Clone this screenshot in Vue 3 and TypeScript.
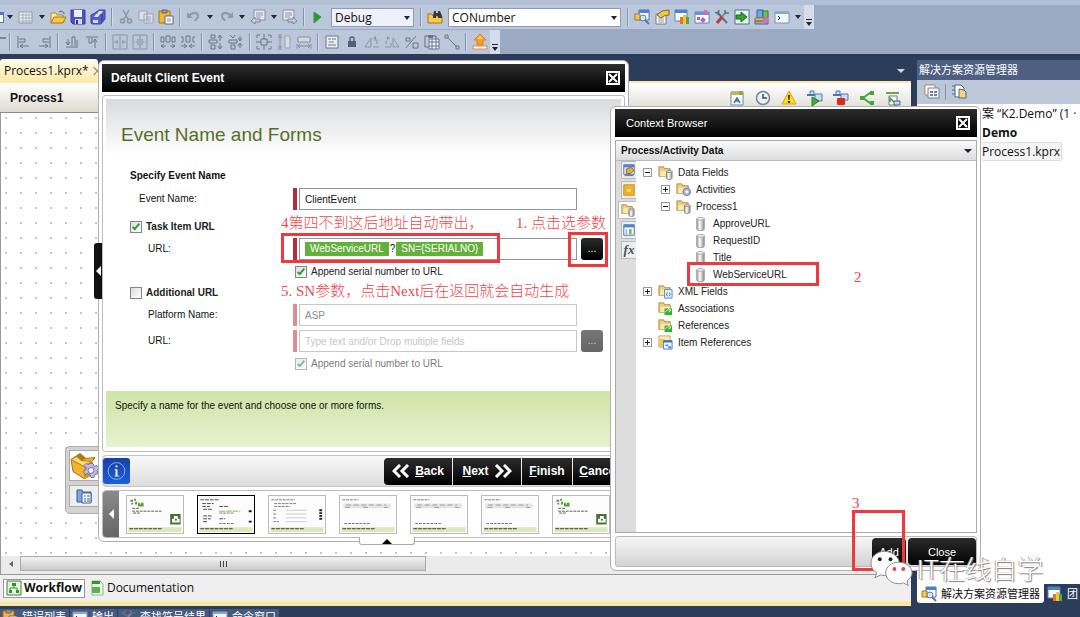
<script setup lang="ts">
import { ref } from 'vue'

type Item = { kind: 'icon' | 'caret' | 'sep'; id?: string }

const icon = (...ids: string[]): Item[] => ids.map((id) => ({ kind: 'icon', id }))
const caret: Item = { kind: 'caret' }
const sep: Item = { kind: 'sep' }

const standardBar: Item[] = [
  caret, ...icon('grid'), caret, ...icon('open', 'save', 'saveall'), sep,
  ...icon('cut', 'copy', 'paste'), sep, ...icon('undo'), caret, ...icon('redo'), caret,
  ...icon('navback'), caret, ...icon('navfwd'), sep, ...icon('play'),
]
const windowBar: Item[] = [
  sep, ...icon('explorer', 'props', 'team', 'start', 'tools', 'export', 'objects', 'console'), caret,
]
const layoutBar: Item[] = [
  sep, ...icon('alignleft', 'alignright'), sep, ...icon('alignbottom', 'aligntop'), sep,
  ...icon('centerh', 'centerv'), sep, ...icon('hinc', 'hdec'), sep, ...icon('vinc', 'vdec'), sep,
  ...icon('samesize', 'sameheight', 'samewidth'), sep,
  ...icon('list', 'lock', 'flip', 'mirror', 'percent', 'table', 'line'), sep, ...icon('upload'),
]
const processIcons = ['chart', 'clock', 'warn', 'runproc', 'stopproc', 'share', 'layoutpage']

const eventName = ref('ClientEvent')
const platform = ref('ASP')
const url = ref('')
const url2 = ref('')
const taskItem = ref(true)
const additional = ref(false)
const append1 = ref(true)
const append2 = ref(true)

const thumbs = ['intro', 'form', 'list', 'grid', 'grid', 'grid', 'intro']
const sideTabs = ['sideenv', 'sidebox', 'foldergray', 'sidetable', 'fx']

type Node = { level: number; toggle: '' | '+' | '-'; id: string; label: string }
const nodes: Node[] = [
  { level: 0, toggle: '-', id: 'foldergray', label: 'Data Fields' },
  { level: 1, toggle: '+', id: 'folderact', label: 'Activities' },
  { level: 1, toggle: '-', id: 'foldergray', label: 'Process1' },
  { level: 2, toggle: '', id: 'field', label: 'ApproveURL' },
  { level: 2, toggle: '', id: 'field', label: 'RequestID' },
  { level: 2, toggle: '', id: 'field', label: 'Title' },
  { level: 2, toggle: '', id: 'field', label: 'WebServiceURL' },
  { level: 0, toggle: '+', id: 'folderxml', label: 'XML Fields' },
  { level: 0, toggle: '', id: 'foldergreen', label: 'Associations' },
  { level: 0, toggle: '', id: 'foldergreen', label: 'References' },
  { level: 0, toggle: '+', id: 'folderitem', label: 'Item References' },
]
const outputTabs = [
  { id: 'paste', label: '错误列表' },
  { id: 'console', label: '输出' },
  { id: 'tools', label: '查找符号结果' },
  { id: 'console', label: '命令窗口' },
]
</script>

<template>
  <div class="ide">
    <svg class="defs" aria-hidden="true">
      <defs>
        <linearGradient id="cyl"><stop offset="0" stop-color="#999" /><stop offset=".4" stop-color="#fff" /><stop offset="1" stop-color="#8a8a8a" /></linearGradient>
        <symbol id="grid" viewBox="0 0 16 16"><path d="M1 3h13v11H1z" fill="#eef1f6" stroke="#8f99ab" /><path d="M2 6h12M2 9h12M2 12h12M5 4v10M8 4v10M11 4v10" stroke="#a5aebd" /></symbol>
        <symbol id="open" viewBox="0 0 16 16"><path d="M1 14V4h5l1 2h6v3" fill="#ffe9a0" stroke="#b58a24" /><path d="M1 14l3-6h12l-3 6z" fill="#fac846" stroke="#a87412" /><path d="M9 3c3-2 5 0 5 2" fill="none" stroke="#395fa8" /></symbol>
        <symbol id="save" viewBox="0 0 16 16"><path d="M1 1h14v14H3l-2-2z" fill="#4d52c4" stroke="#3a3c99" /><path d="M4 1h8v7H4z" fill="#eef" /><path d="M5 10h7v5H5z" fill="#d5d8f2" /><path d="M6 11h2v4H6z" fill="#34378e" /></symbol>
        <symbol id="saveall" viewBox="0 0 16 16"><path d="M5 4l4-3h6v9l-4 5H2l-1-1V6l4-2z" fill="#5a5ecb" stroke="#3f42a6" /><path d="M9 2h4l-2 3H7zM6 5h4L8 8H4z" fill="#dfe1f8" /><path d="M3 11h5v3H3z" fill="#d5d8f2" /><path d="M12 5v8" stroke="#34378e" /></symbol>
        <symbol id="cut" viewBox="0 0 16 16"><path d="M5 1l5 9M11 1L6 10" stroke="#8b94a3" stroke-width="1.5" fill="none" /><circle cx="4.500" cy="12" r="2" fill="none" stroke="#8b94a3" stroke-width="1.500" /><circle cx="11.500" cy="12" r="2" fill="none" stroke="#8b94a3" stroke-width="1.500" /></symbol>
        <symbol id="copy" viewBox="0 0 16 16"><path d="M1 2h8v9H1zM6 5h9v9H6z" fill="#dde2ea" stroke="#9ba4b3" /><path d="M8 8h5M8 10h5M8 12h5" stroke="#a0a8b6" /></symbol>
        <symbol id="paste" viewBox="0 0 16 16"><path d="M1 2h11v12H1z" fill="#f1b73b" stroke="#a6741a" /><path d="M4 1h5v3H4z" fill="#999" stroke="#666" /><path d="M7 7h8v8H7z" fill="#fff" stroke="#5a6684" /><path d="M9 10h4M9 12h4" stroke="#8291b5" /></symbol>
        <symbol id="undo" viewBox="0 0 16 16"><path d="M3 7c3-4 9-4 9 0 0 3-3 4-3 5" fill="none" stroke="#8e98ac" stroke-width="2" /><path d="M1 3v6h6z" fill="#8e98ac" /></symbol>
        <symbol id="redo" viewBox="0 0 16 16"><path d="M13 7c-3-4-9-4-9 0 0 3 3 4 3 5" fill="none" stroke="#8e98ac" stroke-width="2" /><path d="M15 3v6H9z" fill="#8e98ac" /></symbol>
        <symbol id="navback" viewBox="0 0 16 16"><path d="M4 1h11v10H4z" fill="#e7eaf0" stroke="#8791a3" /><path d="M6 4h7M6 6h7M6 8h5" stroke="#9099a9" /><path d="M1 12l4-4v2h5v3H5v2z" fill="#c8cdd8" stroke="#7d8798" /></symbol>
        <symbol id="navfwd" viewBox="0 0 16 16"><path d="M1 1h11v10H1z" fill="#e7eaf0" stroke="#8791a3" /><path d="M3 4h7M3 6h7M3 8h5" stroke="#9099a9" /><path d="M15 12l-4-4v2H6v3h5v2z" fill="#c8cdd8" stroke="#7d8798" /></symbol>
        <symbol id="play" viewBox="0 0 16 16"><path d="M4 3l7 5-7 6z" fill="#2a9a35" stroke="#3a9443" /></symbol>
        <symbol id="findfolder" viewBox="0 0 16 16"><path d="M1 14V5h4l1 2h9v7z" fill="#f9c94e" stroke="#a4741b" /><path d="M6 7l1-5h2v2h2V2h2l2 5v2h-4V7H9v2H6z" fill="#3a3a3a" /></symbol>
        <symbol id="explorer" viewBox="0 0 16 16"><path d="M5 1h10v10H5z" fill="#fff" stroke="#4a71b8" /><path d="M5 1h10v3H5z" fill="#4d7fd4" /><path d="M1 5h5v6H1z" fill="#f5cb55" stroke="#a5781f" /><circle cx="9" cy="9" r="3" fill="#cfe6fa" stroke="#5e7f9d" /><path d="M11 11l4 4" stroke="#607892" stroke-width="2" /></symbol>
        <symbol id="props" viewBox="0 0 16 16"><path d="M2 5h10v10H2z" fill="#fff" stroke="#6b7890" /><path d="M4 9h6M4 11h6M4 13h6" stroke="#8c97aa" /><path d="M3 6l5-4 7-1v5l-5 1-3 2z" fill="#f0c750" stroke="#8c6919" /></symbol>
        <symbol id="team" viewBox="0 0 16 16"><path d="M1 1h12v11H1z" fill="#fff" stroke="#5e7fb8" /><path d="M1 1h12v3H1z" fill="#4d7fd4" /><path d="M6 8h3v7H6z" fill="#e67331" /><path d="M9 6h3v9H9z" fill="#f2c43d" /><path d="M12 8h3v7h-3z" fill="#4ba84b" /></symbol>
        <symbol id="start" viewBox="0 0 16 16"><path d="M1 3h14v11H1z" fill="#fff" stroke="#5e7fb8" /><path d="M1 3h14v3H1z" fill="#6695dc" /><path d="M3 8h3v3H3z" fill="#e65b4b" /><path d="M6 11l3-3 3 3-3 3z" fill="#a46ad1" /><path d="M10 1h3v4h-3z" fill="#e26ba6" /></symbol>
        <symbol id="tools" viewBox="0 0 16 16"><path d="M3 3l10 11" stroke="#5d6d8b" stroke-width="2" /><path d="M12 3L8 8" stroke="#7c889c" stroke-width="2" /><path d="M8 8l-5 6" stroke="#c13a32" stroke-width="3" /><path d="M1 3l3 2 1-4M11 1v3h4" fill="none" stroke="#5d6d8b" stroke-width="1.500" /></symbol>
        <symbol id="export" viewBox="0 0 16 16"><path d="M1 1h14v14H1z" fill="#eaf5ea" stroke="#4c6fa4" /><path d="M2 6h5V3l6 5-6 5v-3H2z" fill="#2fa336" stroke="#146f1e" /></symbol>
        <symbol id="objects" viewBox="0 0 16 16"><path d="M3 1h6v8H3z" fill="#6fa8ee" stroke="#3264a8" /><path d="M9 2h5v7H9z" fill="#71bf59" stroke="#347a2a" /><path d="M1 9h9v3H1z" fill="#f4c243" stroke="#9a7323" /><path d="M1 12h13v3H1z" fill="#9ab" stroke="#567" /><circle cx="12" cy="11" r="3" fill="#d66ac3" /></symbol>
        <symbol id="console" viewBox="0 0 16 16"><path d="M1 3h14v11H1z" fill="#f3f6fb" stroke="#7c93bd" /><path d="M1 3h14v2H1z" fill="#86a7dc" /><path d="M4 7l2 2-2 2" fill="none" stroke="#223" /></symbol>
        <symbol id="alignleft" viewBox="0 0 16 16"><path d="M2 2v12M3 5h6v3H3M4 12h9M7 10l-3 2 3 2" fill="none" stroke="#6b778b" /></symbol>
        <symbol id="alignright" viewBox="0 0 16 16"><path d="M14 2v12M13 5H7v3h6M3 12h9M9 10l3 2-3 2" fill="none" stroke="#6b778b" /></symbol>
        <symbol id="alignbottom" viewBox="0 0 16 16"><path d="M2 13h12M4 11V5M2 8l2 3 2-3M8 12V3h3v9M13 12V6" fill="none" stroke="#6b778b" /></symbol>
        <symbol id="aligntop" viewBox="0 0 16 16"><path d="M2 3h12M5 4v5h3V4M11 5v9M9 8l2-3 2 3" fill="none" stroke="#6b778b" /></symbol>
        <symbol id="centerh" viewBox="0 0 16 16"><path d="M1 1h14v14H1zM8 2v3M8 11v3M8 5v6M2 8h4M10 8h4M5 6v4M11 6v4" fill="none" stroke="#8994a7" /></symbol>
        <symbol id="centerv" viewBox="0 0 16 16"><path d="M1 1h14v14H1zM8 2v4M8 10v4M4 8h8M5 6h6M5 10h6M2 8h1M13 8h1" fill="none" stroke="#8994a7" /></symbol>
        <symbol id="hinc" viewBox="0 0 16 16"><path d="M1 3h3v5H1zM6 2h4v6H6zM12 3h3v5h-3zM1 12h5M4 10l-3 2 3 2M10 12h5M12 10l3 2-3 2" fill="none" stroke="#6b778b" /></symbol>
        <symbol id="hdec" viewBox="0 0 16 16"><path d="M1 3h2v5H1M6 2h4v6H6zM15 3h-2v5h2M1 12h5M4 10l3 2-3 2M10 12h5M12 10l-3 2 3 2" fill="none" stroke="#6b778b" /></symbol>
        <symbol id="vinc" viewBox="0 0 16 16"><path d="M3 1h4v3H3zM1 6h8v3H1zM3 11h4v4H3zM12 7V2M10 4l2-3 2 3M12 9v5M10 12l2 3 2-3" fill="none" stroke="#6b778b" /></symbol>
        <symbol id="vdec" viewBox="0 0 16 16"><path d="M2 1l3 3 2-3M1 6h8v3H1zM3 11h4v4H3zM12 7V2M10 4l2 3 2-3M12 9v5M10 12l2-3 2 3" fill="none" stroke="#6b778b" /></symbol>
        <symbol id="samesize" viewBox="0 0 16 16"><path d="M5 5h6v6H5zM1 4V1h3M12 1h3v3M15 12v3h-3M4 15H1v-3M7 1h2M7 15h2M1 7v2M15 7v2M8 2v3M8 11v3M2 8h3M11 8h3" fill="none" stroke="#6b778b" /></symbol>
        <symbol id="sameheight" viewBox="0 0 16 16"><path d="M2 1h4M2 15h4M4 2v12M2 4l2-2 2 2M2 12l2 2 2-2" fill="none" stroke="#858fa1" /><path d="M9 2h5v12H9z" fill="#d5dae4" stroke="#9aa4b5" /></symbol>
        <symbol id="samewidth" viewBox="0 0 16 16"><path d="M2 3h12v5H2z" fill="#d5dae4" stroke="#858fa1" /><path d="M1 10v5M15 10v5M2 12h12M4 10l-2 2 2 2M12 10l2 2-2 2" fill="none" stroke="#858fa1" /></symbol>
        <symbol id="list" viewBox="0 0 16 16"><path d="M2 2h12v12H2z" fill="#e9edf3" stroke="#6f7b8e" /><path d="M4 5h3M8 5h4M5 8h5M4 11h8" stroke="#6f7b8e" /></symbol>
        <symbol id="lock" viewBox="0 0 16 16"><path d="M6 7V5a2 2 0 0 1 4 0v2" fill="none" stroke="#566175" stroke-width="1.500" /><path d="M4 7h8v6H4z" fill="#566175" /></symbol>
        <symbol id="flip" viewBox="0 0 16 16"><path d="M1 13h6V4zM9 13h6M10 6h3v4" fill="none" stroke="#8b95a7" /><path d="M9 4l3-2v4z" fill="#8b95a7" /></symbol>
        <symbol id="mirror" viewBox="0 0 16 16"><path d="M15 13H9V4zM1 13h6V9M3 7H2v3" fill="none" stroke="#8b95a7" /><path d="M6 4L3 2v4z" fill="#8b95a7" /></symbol>
        <symbol id="percent" viewBox="0 0 16 16"><path d="M2 14L12 2M2 4h4v3H2zM9 9h5v5H9z" fill="none" stroke="#6b778b" /></symbol>
        <symbol id="table" viewBox="0 0 16 16"><path d="M1 2h11v11H1z" fill="#c5cbd6" stroke="#5f6b80" /><path d="M4 1h5v3H4z" fill="#69758a" /><path d="M5 5h10v10H5zM5 8h10M5 12h10M8 5v10M12 5v10" fill="#edf0f5" stroke="#6b778b" /></symbol>
        <symbol id="line" viewBox="0 0 16 16"><path d="M1 1h3v3H1zM12 12h3v3h-3zM4 4l8 8" fill="none" stroke="#6b778b" /></symbol>
        <symbol id="upload" viewBox="0 0 16 16"><path d="M1 12h14v3H1z" fill="#fff" stroke="#d98a4a" /><path d="M8 0l6 6h-3v5H5V6H2z" fill="#fb9b22" stroke="#e8821e" /><path d="M8 2l3 3H5z" fill="#ffe07b" /></symbol>
        <symbol id="chart" viewBox="0 0 16 16"><path d="M2 2h12v13H2z" fill="#fff" stroke="#6485a9" /><path d="M2 2h12v3H2z" fill="#d9ae4c" /><path d="M5 13l3-5 3 5M6 11h4" fill="none" stroke="#3576b7" stroke-width="1.500" /><path d="M10 1h4v4h-4z" fill="#8cae3e" /></symbol>
        <symbol id="clock" viewBox="0 0 16 16"><circle cx="8" cy="8" r="6.500" fill="#e8f1fb" stroke="#7a8396" stroke-width="1.500" /><path d="M8 4v4h4" fill="none" stroke="#33456a" stroke-width="1.500" /></symbol>
        <symbol id="warn" viewBox="0 0 16 16"><path d="M8 1l7 13H1z" fill="#ffd91b" stroke="#dca60c" stroke-linejoin="round" /><path d="M7 5h2l-.5 5h-1zM7 11h2v2H7z" fill="#222" /></symbol>
        <symbol id="runproc" viewBox="0 0 16 16"><path d="M3 1h4v4H3zM8 4h7v7H8z" fill="#cbdff3" stroke="#527aa8" /><path d="M0 5h8" stroke="#4275b1" stroke-width="2" /><path d="M5 7l7 4-7 5z" fill="#42ae3e" stroke="#277b29" /></symbol>
        <symbol id="stopproc" viewBox="0 0 16 16"><path d="M3 1h4v4H3zM8 4h7v6H8z" fill="#cbdff3" stroke="#527aa8" /><path d="M0 5h8" stroke="#4275b1" stroke-width="2" /><rect x="4" y="8" width="8" height="7" rx="1" fill="#dc2a22" /></symbol>
        <symbol id="share" viewBox="0 0 16 16"><path d="M14 3h-3L4 8l7 5h3" fill="none" stroke="#3eae3a" stroke-width="2" /><path d="M1 6h5v4H1zM11 1h4v4h-4zM11 11h4v4h-4z" fill="#42a83c" /></symbol>
        <symbol id="layoutpage" viewBox="0 0 16 16"><path d="M1 2h13v2H1z" fill="#69a457" /><path d="M4 6h8v9H4z" fill="#fff" stroke="#668098" /><path d="M5 12V8l4 4" fill="none" stroke="#36a335" stroke-width="1.500" /><path d="M9 11h6v4H9z" fill="#c6d7e9" stroke="#4c6787" /></symbol>
        <symbol id="winstack" viewBox="0 0 16 16"><path d="M1 1h10v10H1z" fill="#fff" stroke="#a58a4c" /><path d="M4 4h11v10H4z" fill="#f1f3f8" stroke="#77839c" /><path d="M6 8h3M6 11h3M10 8h3M10 11h3" stroke="#77839c" stroke-width="2" /></symbol>
        <symbol id="pages" viewBox="0 0 16 16"><path d="M1 2h3M1 6h3M1 10h3" stroke="#3b6bb0" /><path d="M4 1h6l3 3v9H4z" fill="#fff" stroke="#53678b" /><path d="M8 5l5 1 2 2v6H8z" fill="#f6d477" stroke="#53678b" /></symbol>
        <symbol id="folderbase" viewBox="0 0 16 16"><path d="M1 12V2h5l1 2h6v8z" fill="#eed07e" stroke="#a8873c" /><path d="M2 12l1-6h10v6z" fill="#fbe8ae" /></symbol>
        <symbol id="field" viewBox="0 0 16 16"><path d="M4 3v11c0 2 8 2 8 0V3z" fill="url(#cyl)" stroke="#999" /><ellipse cx="8" cy="3" rx="4" ry="1.500" fill="#eee" stroke="#aaa" /></symbol>
        <symbol id="foldergray" viewBox="0 0 16 16"><use href="#folderbase" /><path d="M9 7v7c0 2 6 2 6 0V7z" fill="url(#cyl)" stroke="#888" /><ellipse cx="12" cy="7" rx="3" ry="1" fill="#eee" stroke="#888" /></symbol>
        <symbol id="folderact" viewBox="0 0 16 16"><use href="#folderbase" /><circle cx="11.500" cy="10.500" r="4" fill="#a9bce6" stroke="#5d71b4" /><circle cx="11.500" cy="10.500" r="1.500" fill="#fff" /></symbol>
        <symbol id="folderxml" viewBox="0 0 16 16"><use href="#folderbase" /><path d="M7 6h8v9H7z" fill="#e9f3fd" stroke="#5687bd" /><path d="M10 9l-1 2 1 2M12 9l1 2-1 2" fill="none" stroke="#2874ba" /></symbol>
        <symbol id="foldergreen" viewBox="0 0 16 16"><use href="#folderbase" /><path d="M7 8h8v7H7z" fill="#34ae35" /><path d="M8 12c1-3 3-3 5-2M11 8l3 2-3 2" fill="none" stroke="#d9ffd0" /></symbol>
        <symbol id="folderitem" viewBox="0 0 16 16"><path d="M1 1h12v12H1z" fill="#fff1ca" stroke="#d39b38" /><path d="M1 4h7v9H1z" fill="#efc668" /><path d="M6 6h9v9H6z" fill="#fff" stroke="#3873c4" /><path d="M6 6h9v2H6z" fill="#3873c4" /><path d="M8 10h3v2H8zM11 12h3v2h-3z" fill="#4f8ede" /></symbol>
        <symbol id="sideenv" viewBox="0 0 16 16"><path d="M2 2h12v11H2z" fill="#dbe8fa" stroke="#5271ac" /><path d="M2 2h12v3H2z" fill="#5b80ce" /><path d="M5 7l5-2 4 3-4 4H5z" fill="#e3ae42" stroke="#8b6521" /><path d="M3 14h10" stroke="#6d7f9e" stroke-width="2" /></symbol>
        <symbol id="sidebox" viewBox="0 0 16 16"><path d="M2 2h12v12H2z" fill="#f4b423" stroke="#c98b16" /><path d="M5 6h6v5H5z" fill="#ffd979" stroke="#e5a62b" /></symbol>
        <symbol id="sidetable" viewBox="0 0 16 16"><path d="M2 2h12v12H2z" fill="#f1f6fc" stroke="#466fae" /><path d="M2 2h12v3H2z" fill="#4f82cf" /><path d="M4 7h2v6H4z" fill="#9dbfe9" /><path d="M8 7h3v6H8z" fill="#79b86c" /></symbol>
        <symbol id="box" viewBox="0 0 30 28"><path d="M1 8l9-6 6 5 9-1-3 4v13l-8 4-11-7z" fill="#f3b52d" stroke="#a8710f" /><path d="M1 8l9-6 6 5-9 5z" fill="#b07a1c" /><path d="M1 8l6-3 4 4 11 1-8 5z" fill="#ffdb72" stroke="#b67f17" /><path d="M14 15l8-4v13l-8 4z" fill="#dc9414" /><g transform="translate(21 20)"><path d="M-1-8h3l1 3 3-1 2 3-2 2 1 3-3 1-1 3h-3l-1-3-3-1-2 1-2-3 3-2v-2l-2-2 2-2 3 1z" fill="#bdbce8" stroke="#7371ac" /><circle cx="0" cy="-1" r="3" fill="#eee" stroke="#7371ac" /></g></symbol>
        <symbol id="page" viewBox="0 0 16 16"><path d="M1 14V2h5l1 2h8v10z" fill="#7ba7da" stroke="#365f97" /><path d="M6 5h9v10H6z" fill="#fff" stroke="#365f97" /><path d="M8 8h2M11 8h3M8 11h2M11 11h3M8 13h2M11 13h3" stroke="#365f97" /></symbol>
        <symbol id="flow" viewBox="0 0 16 16"><path d="M1 1h14v14H1z" fill="#e9f3e5" stroke="#447a37" /><path d="M6 3h4v3H6zM3 10h3v3H3zM10 10h3v3h-3z" fill="#329327" /><path d="M8 6v2M4 10V8h7v2" fill="none" stroke="#329327" /></symbol>
        <symbol id="doc" viewBox="0 0 16 16"><path d="M3 1h8l3 3v11H3z" fill="#f4faf0" stroke="#8fb588" /><path d="M3 1h8v3H3z" fill="#2c9b27" /><path d="M3 7h8v6H3z" fill="#56b64b" /></symbol>
        <symbol id="boxclose" viewBox="0 0 16 16"><path d="M2 2h12v12H2z" fill="#111" stroke="#fff" stroke-width="2" /><path d="M4 4l8 8M12 4l-8 8" stroke="#fff" stroke-width="2" /></symbol>
      </defs>
    </svg>

    <header class="bars">
      <div class="bar" role="toolbar" aria-label="Standard">
        <span class="stub"></span>
        <template v-for="(t, i) in standardBar" :key="i">
          <button v-if="t.kind === 'icon'" class="tool" type="button" :aria-label="t.id"><svg><use :href="'#' + t.id" /></svg></button>
          <span v-else :class="t.kind"></span>
        </template>
        <span class="pick config"><select aria-label="Configuration"><option>Debug</option></select></span>
        <span class="sep"></span>
        <button class="tool" type="button" aria-label="Find in files"><svg><use href="#findfolder" /></svg></button>
        <span class="pick search"><select aria-label="Find"><option>CONumber</option></select></span>
        <template v-for="(t, i) in windowBar" :key="i">
          <button v-if="t.kind === 'icon'" class="tool" type="button" :aria-label="t.id"><svg><use :href="'#' + t.id" /></svg></button>
          <span v-else :class="t.kind"></span>
        </template>
        <span class="more"></span>
      </div>
      <div class="bar" role="toolbar" aria-label="Layout">
        <span class="stub plain"></span>
        <template v-for="(t, i) in layoutBar" :key="i">
          <button v-if="t.kind === 'icon'" class="tool" type="button" :aria-label="t.id"><svg><use :href="'#' + t.id" /></svg></button>
          <span v-else :class="t.kind"></span>
        </template>
        <span class="more"></span>
      </div>
    </header>

    <main class="work">
      <section class="editor">
        <div class="tabs"><a href="#" class="tab">Process1.kprx*<i></i></a><i class="drop"></i></div>
        <div class="process">
          <h2>Process1</h2>
          <button v-for="p in processIcons" :key="p" type="button" class="plainbtn" :aria-label="p"><svg><use :href="'#' + p" /></svg></button>
        </div>
        <div class="canvas">
          <div class="floatbox">
            <div><svg class="big"><use href="#box" /></svg></div>
            <div><svg><use href="#page" /></svg></div>
          </div>
        </div>
        <div class="scroll"><i class="scroll-left"></i><div class="thumb"><i></i></div></div>
        <nav class="views">
          <a href="#" class="view on"><svg><use href="#flow" /></svg>Workflow</a>
          <a href="#" class="view"><svg><use href="#doc" /></svg>Documentation</a>
        </nav>
      </section>

      <aside class="solution">
        <h2>解决方案资源管理器</h2>
        <div class="soltools"><svg><use href="#winstack" /></svg><i></i><svg><use href="#pages" /></svg></div>
        <ul class="soltree">
          <li>案 “K2.Demo” (1 ·</li>
          <li class="strong">Demo</li>
          <li><span class="sel">Process1.kprx</span></li>
        </ul>
        <nav class="soltabs">
          <a href="#" class="on"><svg><use href="#explorer" /></svg>解决方案资源管理器</a>
          <a href="#"><svg><use href="#team" /></svg>团</a>
        </nav>
      </aside>
    </main>

    <footer class="outputs">
      <a v-for="o in outputTabs" :key="o.label" href="#"><svg><use :href="'#' + o.id" /></svg>{{ o.label }}</a>
    </footer>

    <section class="window wizard" role="dialog" aria-label="Default Client Event">
      <button class="handle" type="button" aria-label="Collapse"></button>
      <header class="caption"><h1>Default Client Event</h1><button type="button" aria-label="Close"><svg><use href="#boxclose" /></svg></button></header>
      <div class="sheet">
        <form class="form" @submit.prevent>
          <h2>Event Name and Forms</h2>
          <h3>Specify Event Name</h3>
          <div class="row"><label class="lab near" for="ename">Event Name:</label><div class="entry"><input id="ename" v-model="eventName" class="text" type="text" /></div></div>
          <div class="row group"><label class="check head"><input v-model="taskItem" type="checkbox" />Task Item URL</label></div>
          <div class="row">
            <label class="lab" for="url">URL:</label>
            <div class="entry"><div class="text tokens"><span>WebServiceURL</span>?<span>SN={SERIALNO}</span><input id="url" v-model="url" type="text" /></div></div>
            <button type="button" class="dots">...</button>
          </div>
          <div class="row sub"><label class="check"><input v-model="append1" type="checkbox" />Append serial number to URL</label></div>
          <div class="row"><label class="check head"><input v-model="additional" type="checkbox" />Additional URL</label></div>
          <div class="row off"><label class="lab" for="platform">Platform Name:</label><div class="entry"><input id="platform" v-model="platform" class="text" type="text" disabled /></div></div>
          <div class="row off second">
            <label class="lab" for="url2">URL:</label>
            <div class="entry"><input id="url2" v-model="url2" class="text" type="text" placeholder="Type text and/or Drop multiple fields" disabled /></div>
            <button type="button" class="dots" disabled>...</button>
          </div>
          <div class="row off sub"><label class="check"><input v-model="append2" type="checkbox" disabled />Append serial number to URL</label></div>
        </form>
        <p class="help">Specify a name for the event and choose one or more forms.</p>
      </div>
      <div class="actions">
        <button type="button" class="info" aria-label="Information"><svg viewBox="0 0 28 28"><circle cx="14" cy="14" r="9" fill="none" stroke="#8db4ff" /><path d="M12 12h3v7h2v1h-5v-1h1v-6h-1zM13 8h2v2h-2z" fill="#fff" /></svg></button>
        <div class="nav">
          <button type="button"><svg viewBox="0 0 18 14"><path d="M8 1L2 7l6 6M16 1l-6 6 6 6" /></svg><span><u>B</u>ack</span></button>
          <button type="button"><span><u>N</u>ext</span><svg viewBox="0 0 18 14"><path d="M2 1l6 6-6 6M10 1l6 6-6 6" /></svg></button>
          <button type="button"><span><u>F</u>inish</span></button>
          <button type="button"><span><u>C</u>ancel</span></button>
        </div>
      </div>
      <div class="strip">
        <button type="button" class="prev" aria-label="Previous"></button>
        <svg v-for="(t, i) in thumbs" :key="i" class="mini" :class="{ current: i === 1 }" viewBox="0 0 58 39">
          <path d="M0 0h58v39H0z" fill="#fcfcfc" /><path d="M1 33h56v5H1z" fill="#d9e9b9" /><path d="M2 34.500h35" stroke="#333" stroke-dasharray="4 1" />
          <g v-if="t === 'intro'"><path d="M3 4h3v2H3zM7 3h2v2H7zM4 7h2v2H4zM8 6h2v3H8zM11 7h2v4h-2zM14 7h3v2h-3zM13 9h4v2h-4z" fill="#5a9b3c" /><path d="M5 13h7M5 16h31M6 18h8" stroke="#555" stroke-dasharray="3 1" /><path d="M45 19h11v11H45z" fill="#44742c" /><path d="M47 28v-4h2v-3h4v3h2v4z" fill="#fff" /><path d="M50 24h2v2h-2z" fill="#44742c" /></g>
          <g v-else-if="t === 'form'"><path d="M2 4h20M4 8h12M4 11h8M22 11h9M5 14h10M5 21h10M5 24h8M22 24h6M5 27h5" stroke="#444" stroke-dasharray="4 1" /><path d="M22 16h22" stroke="#78b65d" stroke-dasharray="6 1" /><path d="M53 16h3M53 27h3" stroke="#111" stroke-width="2" /><path d="M22 18h15M22 29h15" stroke="#777" stroke-dasharray="3 1" /></g>
          <g v-else-if="t === 'list'"><path d="M2 4h25M5 8h24M5 11h17M4 15h4M4 19h3M4 23h4M4 27h6" stroke="#777" stroke-dasharray="3 1" /><path d="M17 15h22M17 19h22M17 23h22M17 27h22" stroke="#ccc" /><path d="M54 14v12" stroke="#222" stroke-width="3" stroke-dasharray="2 1" /></g>
          <g v-else><path d="M2 4h17M4 29h28" stroke="#777" stroke-dasharray="3 1" /><path d="M3 8h50v5H3z" fill="#e4e4e4" /><path d="M6 9.500h42M5 12h5M24 12h8M46 12h4" stroke="#999" stroke-dasharray="5 3" /></g>
        </svg>
      </div>
      <button class="lift" type="button" aria-label="Hide steps"></button>
    </section>

    <section class="window context" role="dialog" aria-label="Context Browser">
      <header class="caption"><h1>Context Browser</h1><button type="button" aria-label="Close"><svg><use href="#boxclose" /></svg></button></header>
      <div class="browser">
        <button type="button" class="section">Process/Activity Data<i></i></button>
        <div class="panes">
          <div class="side">
            <button v-for="s in sideTabs" :key="s" type="button" :class="{ on: s === 'foldergray' }" :aria-label="s"><em v-if="s === 'fx'">fx</em><svg v-else><use :href="'#' + s" /></svg></button>
          </div>
          <ul class="tree">
            <li v-for="n in nodes" :key="n.label" :class="'level' + n.level">
              <button v-if="n.toggle" type="button" class="toggle" :class="{ plus: n.toggle === '+' }" :aria-label="n.label"></button>
              <span v-else class="notoggle"></span>
              <svg><use :href="'#' + n.id" /></svg>{{ n.label }}
            </li>
          </ul>
        </div>
      </div>
      <div class="choose"><button type="button" class="add">Add</button><button type="button" class="close">Close</button></div>
    </section>

    <div class="mark box-url"></div>
    <div class="mark box-dots"></div>
    <div class="mark box-field"></div>
    <div class="mark box-add"></div>
    <p class="note n1">1. 点击选参数</p>
    <p class="note n2">2</p>
    <p class="note n3">3</p>
    <p class="note n4">4第四不到这后地址自动带出，</p>
    <p class="note n5">5. SN参数，点击Next后在返回就会自动生成</p>

    <div class="brand">
      <svg viewBox="0 0 44 38"><path d="M15 2C7 2 1 7 1 14c0 4 2 8 6 10l-2 5 6-3c2 1 5 1 7 0 7 0 12-6 12-12S23 2 15 2z" fill="#fff" stroke="#888" /><circle cx="10" cy="10" r="2" fill="#222" /><circle cx="21" cy="10" r="2" fill="#222" /><path d="M29 13c-7 0-13 5-13 11s6 11 13 11c2 0 4 0 5-1l5 3-1-5c3-2 5-5 5-8 0-6-6-11-14-11z" fill="#fff" stroke="#888" /><circle cx="25" cy="20" r="2" fill="#e44" /><circle cx="34" cy="20" r="2" fill="#e44" /></svg>
      <span>IT在线自学</span>
    </div>
  </div>
</template>

<style>
body { margin: 0; }
</style>

<style scoped>
.ide { --ui: "Open Sans", "Noto Sans CJK SC", sans-serif; --app: "Liberation Sans", "Noto Sans CJK SC", sans-serif; position: relative; display: flex; flex-direction: column; height: 100vh; overflow: hidden; background: #2c3c5b; font: 12px/16px var(--ui); color: #111; box-sizing: border-box; }
.ide *, .ide *::before, .ide *::after { box-sizing: border-box; }
.defs { position: absolute; width: 0; height: 0; }
h1, h2, h3, p, ul { margin: 0; padding: 0; font-size: 12px; }
ul { list-style: none; }
button { font: inherit; padding: 0; border: 0; background: none; color: inherit; }
input, select { font: inherit; color: inherit; margin: 0; }
a { color: inherit; text-decoration: none; }
svg { width: 16px; height: 16px; flex: none; display: block; }

.bars { background: #9ba9c2; border-top: 5px solid #b3bfd5; display: flex; flex-direction: column; align-items: flex-start; gap: 1px; }
.bar { display: flex; align-items: center; height: 24px; background: #bbc7da; }
.stub { width: 4px; height: 11px; border: 1px solid #4d77bd; border-left: 0; border-top-width: 3px; background: #fff; }
.stub.plain { width: 6px; border: 0; border-top: 2px solid #7b8699; background: none; }
.tool { width: 20px; height: 22px; display: grid; place-items: center; }
.caret { width: 12px; display: grid; place-items: center; }
.caret::before, .pick::after, .more::after, .drop::before, .section i { content: ""; border: 3px solid transparent; border-top: 4px solid #1c2536; border-bottom: 0; }
.sep { width: 8px; height: 18px; display: grid; justify-content: center; }
.sep::before { content: ""; width: 2px; border-left: 1px solid #8592ab; border-right: 1px solid #d5deea; }
.pick { position: relative; margin: 0 3px; }
.pick select { appearance: none; width: 100%; height: 19px; line-height: 15px; border: 1px solid #8c9cb8; background: #fff; padding: 0 0 0 3px; display: block; }
.pick::after { position: absolute; right: 4px; top: 8px; }
.config { width: 83px; }
.config select { background: #eef1f8; }
.search { width: 173px; }
.more { width: 10px; height: 24px; background: #d5dded; display: flex; flex-direction: column; align-items: center; justify-content: flex-end; gap: 2px; padding-bottom: 3px; }
.more::before { content: ""; width: 6px; height: 1px; background: #1c2536; }

.work { flex: 1; display: flex; gap: 6px; min-height: 0; padding-top: 6px; }
.editor { flex: 1; min-width: 0; display: flex; flex-direction: column; background: #efefef; border-bottom: 5px solid #f8e8a8; }
.tabs { display: flex; justify-content: space-between; align-items: center; height: 23px; background: #2c3c5b; border-bottom: 2px solid #ffe8a6; }
.tab { width: 98px; height: 23px; padding: 1px 0 0 4px; background: linear-gradient(#fffcee, #ffe9a6); border-radius: 3px 3px 0 0; white-space: nowrap; display: flex; align-items: center; gap: 2px; }
.tab i { width: 6px; height: 6px; border: solid #8a7a50; border-width: 1px 1px 0 0; transform: rotate(45deg); }
.drop { padding-right: 6px; display: flex; }
.drop::before { border-width: 4px; border-top: 4px solid #cfd7e6; border-bottom: 0; }
.process { display: flex; align-items: center; gap: 10px; height: 30px; padding: 0 10px 0 10px; background: linear-gradient(#fff, #dddbd0); border-bottom: 1px solid #8a8a8a; font-family: var(--app); }
.process h2 { margin-right: auto; }
.canvas { position: relative; flex: 1; border-left: 1px solid #999; background: radial-gradient(circle at 5px 5px, #c4c4c4 1px, transparent 1px) 0 0 / 15px 15px #fff; }
.floatbox { position: absolute; left: 64px; top: 333px; width: 60px; padding: 3px 3px 6px; border: 1px solid #aaa; border-radius: 5px; background: #d3d3d3; display: grid; gap: 4px; }
.floatbox div { height: 31px; background: #fff; border: 1px solid #aaa; }
.floatbox div + div { height: 22px; padding: 2px 6px; background: #eee; }
.big { width: 30px; height: 29px; }
.scroll { display: flex; align-items: center; height: 19px; border-bottom: 1px solid #999; border-left: 1px solid #999; background: #ebebeb; padding-bottom: 3px; }
.scroll-left { width: 19px; height: 16px; display: grid; place-items: center; }
.scroll-left::before { content: ""; border: 3px solid transparent; border-right: 4px solid #666; border-left: 0; }
.thumb { width: 406px; height: 15px; border: 1px solid #aaa; background: linear-gradient(#f2f2f2, #cacaca); display: grid; place-items: center; }
.thumb i { width: 7px; height: 6px; background: repeating-linear-gradient(90deg, #444 0 1px, transparent 1px 3px); }
.views { display: flex; align-items: center; height: 26px; gap: 2px; padding-left: 3px; }
.view { display: flex; align-items: center; gap: 2px; height: 19px; padding: 0 2px; font-size: 12px; }
.view.on { background: #fff; border: 1px solid #999; font-weight: 700; }

.solution { width: 163px; display: flex; flex-direction: column; }
.solution h2 { height: 20px; line-height: 19px; padding-left: 2px; font-weight: 400; font-size: 11px; color: #fff; background: #4d6082; }
.soltools { display: flex; align-items: center; gap: 5px; height: 24px; padding-left: 7px; background: #bcc7d8; }
.soltools i { width: 1px; height: 16px; background: #8592ab; }
.soltree { flex: 1; background: #fff; padding-left: 65px; }
.soltree li { height: 19px; line-height: 19px; font-size: 12px; white-space: nowrap; }
.soltree .strong { font-weight: 700; }
.sel { display: inline-block; height: 19px; padding: 0 1px 0 0; line-height: 17px; background: #f4f4f4; border: 1px solid #ddd; border-left: 0; border-radius: 2px; }
.soltabs { display: flex; height: 22px; white-space: nowrap; font-size: 11px; }
.soltabs a { display: flex; align-items: center; gap: 4px; height: 19px; padding: 0 4px; color: #fff; }
.soltabs a + a { padding: 0 3px; }
.soltabs .on { background: #fff; color: #111; border-radius: 0 0 3px 3px; }

.outputs { display: flex; gap: 1px; height: 11px; padding-top: 3px; overflow: hidden; font-size: 11px; color: #fff; }
.outputs a { display: flex; gap: 4px; height: 18px; padding: 0 3px 0 2px; background: #465a7d; flex: none; }

.window { position: absolute; background: #fff; border: 1px solid #b0b0b0; border-radius: 6px; padding: 3px; font: 10px/14px var(--app); display: flex; flex-direction: column; gap: 3px; }
.caption { display: flex; align-items: center; justify-content: space-between; height: 28px; padding: 0 4px 0 9px; background: linear-gradient(#2d2d2d, #000); color: #fff; }
.wizard { left: 98px; top: 60px; width: 531px; }
.handle { position: absolute; left: -5px; top: 182px; width: 8px; height: 56px; border-radius: 3px 0 0 3px; background: #111; display: grid; place-items: center; }
.handle::before { content: ""; border: 5px solid transparent; border-right: 5px solid #fff; border-left: 0; }
.sheet { border: 1px solid #bbb; border-radius: 3px; padding: 3px 3px 4px; }
.form { height: 292px; padding: 0 12px 0 24px; background: linear-gradient(#d9dadd, #fff 56px); }
.form h2 { margin: 0 0 0 -9px; padding: 24px 0 18px; font-size: 19px; line-height: 24px; font-weight: 400; color: #55702a; }
.form h3 { font-size: 10px; line-height: 22px; margin-bottom: 1px; }
.row { display: flex; align-items: center; height: 22px; }
.row.group { margin-top: 6px; }
.row.second { margin-top: 4px; }
.row.sub { padding: 1px 0 0 165px; }
.lab { width: 145px; margin-left: 18px; flex: none; }
.lab.near { width: 154px; margin-left: 9px; }
.entry { display: flex; gap: 2px; width: 284px; height: 22px; flex: none; }
.entry::before { content: ""; width: 4px; background: #b02e3c; }
.text { flex: 1; min-width: 0; height: 22px; padding: 0 5px; border: 1px solid #8d989e; border-radius: 0; background: #fff; outline: 0; }
.tokens { display: flex; align-items: center; gap: 1px; }
.tokens span { height: 14px; padding: 0 5px; line-height: 14px; background: #63b03a; color: #fff; white-space: nowrap; }
.tokens input { flex: 1; min-width: 0; height: 18px; border: 0; padding: 0; outline: 0; }
.dots { width: 22px; height: 22px; margin-left: 4px; border-radius: 3px; background: linear-gradient(#2b2b2b, #000); color: #fff; }
.off .entry::before { background: #d78f99; }
.off .text { border-color: #c4c8ca; color: #8a8a8a; }
.off .text::placeholder { color: #c5c5c5; opacity: 1; }
.off .check { color: #7c7c7c; }
.off .check input { opacity: .6; }
.off .dots { background: linear-gradient(#777, #666); color: #ccc; }
.check { display: flex; align-items: center; gap: 4px; color: #222; }
.head { font-weight: 700; }
.check input { appearance: none; width: 12px; height: 12px; border: 1px solid #858585; background: linear-gradient(135deg, #ddd, #fff); display: grid; place-items: center; }
.check input:checked::after { content: ""; width: 4px; height: 8px; margin-top: -2px; border: solid #2d9e36; border-width: 0 2px 2px 0; transform: rotate(40deg); }
.help { height: 56px; padding: 8px 9px; font-size: 10px; line-height: 14px; background: linear-gradient(#cfe4a5, #e7f2d1); color: #111; }
.actions { display: flex; justify-content: space-between; align-items: center; height: 32px; border: 1px solid #c4c4c4; border-radius: 4px; background: linear-gradient(#fafafa, #dcdcdc); }
.info { width: 27px; height: 26px; border-radius: 3px; background: linear-gradient(#1a3fa5, #1b60d8); display: grid; place-items: center; }
.info svg { width: 27px; height: 26px; }
.nav { display: flex; gap: 1px; margin-right: -1px; color: #fff; font-size: 12px; font-weight: 700; }
.nav button { display: flex; align-items: center; justify-content: center; gap: 5px; width: 68px; height: 27px; background: linear-gradient(#2c2c2c, #000); }
.nav button:first-child { border-radius: 4px 0 0 4px; }
.nav button:nth-child(3) { width: 50px; }
.nav button:last-child { width: 52px; border-radius: 0 4px 4px 0; }
.nav svg { width: 18px; height: 14px; fill: none; stroke: #fff; stroke-width: 3; }
.strip { display: flex; align-items: center; gap: 13px; height: 48px; border: 1px solid #bbb; border-radius: 4px; overflow: hidden; }
.prev { width: 16px; height: 46px; margin-right: -6px; background: linear-gradient(#8a8a8a, #666); display: grid; place-items: center; flex: none; }
.prev::before { content: ""; border: 5px solid transparent; border-right: 5px solid #fff; border-left: 0; }
.mini { width: 58px; height: 39px; border: 1px solid #bbb; }
.mini.current { border: 1px solid #000; outline: 1px solid #000; outline-offset: -1px; }
.lift { position: absolute; left: 260px; bottom: -4px; width: 56px; height: 8px; border: 1px solid #aaa; border-top: 0; border-radius: 0 0 3px 3px; background: #fff; display: grid; justify-content: center; }
.lift::before { content: ""; border: 5px solid transparent; border-bottom: 5px solid #000; border-top: 0; }

.context { left: 610px; top: 106px; width: 371px; height: 465px; padding: 2px 3px 3px 4px; }
.context .caption { padding: 0 6px 0 11px; flex: none; }
.context h1 { font-weight: 400; font-size: 11px; }
.browser { flex: 1; display: flex; flex-direction: column; border: 1px solid #aaa; background: #ddd; }
.section { display: flex; justify-content: space-between; align-items: center; height: 20px; padding: 0 4px 0 5px; background: linear-gradient(#fafafa, #ddd); font-weight: 700; border-bottom: 1px solid #bbb; }
.section i { border-width: 4px; border-bottom: 0; }
.panes { flex: 1; display: flex; }
.side { width: 20px; display: flex; flex-direction: column; align-items: flex-end; gap: 2px; }
.side button { width: 15px; height: 18px; border: 1px solid #bbb; border-right: 0; background: #eee; display: grid; place-items: center; overflow: hidden; }
.side svg { width: 14px; height: 14px; }
.side .on { width: 18px; background: #fff; }
.side em { font: italic 700 13px/16px "Liberation Serif", serif; color: #44505c; }
.tree { flex: 1; background: #fff; padding: 3px 0 0 7px; font-size: 10px; }
.tree li { display: flex; align-items: center; height: 17px; color: #222; }
.tree svg { margin-right: 5px; width: 15px; height: 15px; }
.level1 { padding-left: 18px; }
.level2 { padding-left: 35px; }
.toggle, .notoggle { width: 9px; height: 9px; margin-right: 6px; flex: none; }
.toggle { border: 1px solid #999; background: linear-gradient(#222, #222) center / 5px 1px no-repeat #fff; }
.toggle.plus { background: linear-gradient(#222, #222) center / 5px 1px no-repeat, linear-gradient(#222, #222) center / 1px 5px no-repeat #fff; }
.choose { display: flex; justify-content: flex-end; align-items: center; gap: 2px; height: 31px; border: 1px solid #bbb; border-radius: 3px; background: linear-gradient(#f6f6f6, #d3d3d3); font-size: 11px; color: #fff; }
.choose button { height: 27px; border-radius: 4px; background: linear-gradient(#2c2c2c, #000); }
.add { width: 34px; }
.close { width: 68px; }

.mark { position: absolute; border: 3px solid #ee3a3e; }
.box-url { left: 281px; top: 233px; width: 219px; height: 30px; }
.box-dots { left: 568px; top: 232px; width: 40px; height: 35px; }
.box-field { left: 687px; top: 262px; width: 132px; height: 24px; }
.box-add { left: 852px; top: 510px; width: 53px; height: 61px; }
.note { position: absolute; font: 300 15px/20px "Liberation Serif", "Noto Sans CJK SC", serif; color: #ee474b; white-space: nowrap; }
.n1 { left: 516px; top: 213px; }
.n2 { left: 854px; top: 267px; }
.n3 { left: 852px; top: 493px; }
.n4 { left: 281px; top: 213px; }
.n5 { left: 281px; top: 281px; }
.brand { position: absolute; left: 870px; top: 549px; display: flex; align-items: center; gap: 4px; }
.brand svg { width: 43px; height: 38px; }
.brand span { font: 300 26px/36px "Noto Sans CJK SC", sans-serif; color: #fff; text-shadow: 1px 1px 1px #777, -1px 0 0 #aaa; white-space: nowrap; }
</style>
